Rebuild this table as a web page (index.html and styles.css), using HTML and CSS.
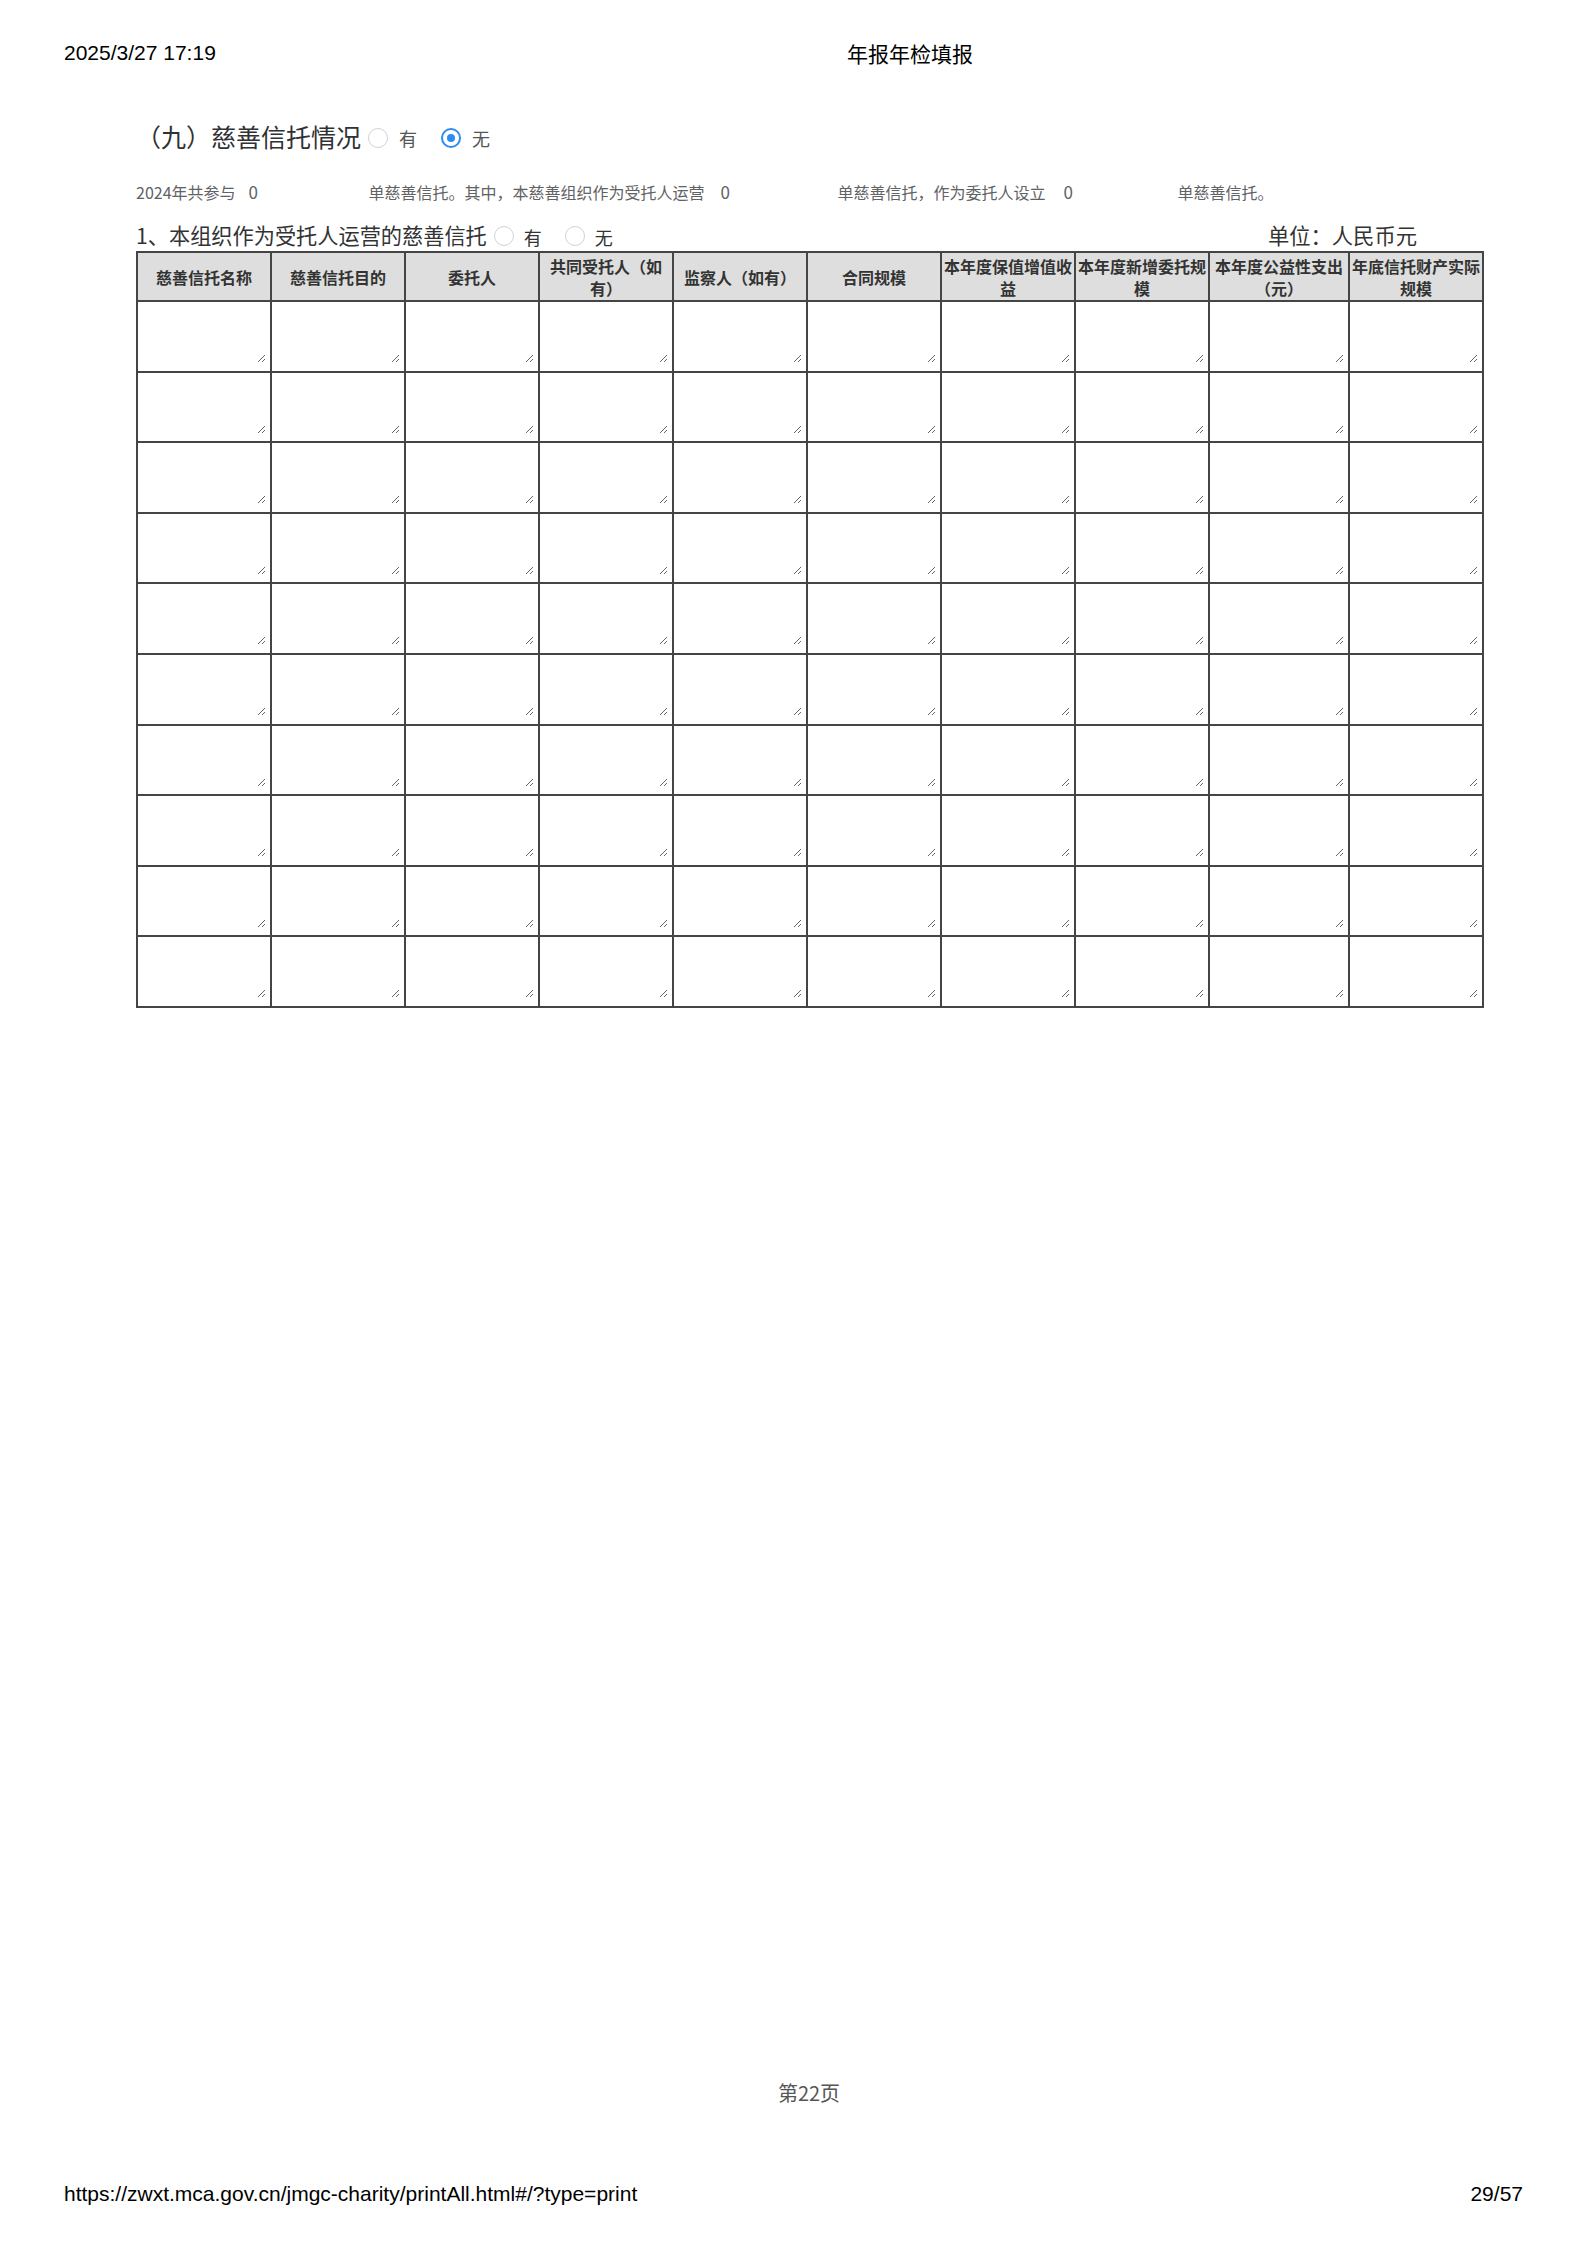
FILE: index.html
```html
<!DOCTYPE html>
<html lang="zh-CN">
<head>
<meta charset="utf-8">
<title>年报年检填报</title>
<link rel="stylesheet" href="styles.css">
</head>
<body>
<div class="page">
  <div class="print-head">
    <span class="head-date">2025/3/27 17:19</span>
    <span class="head-title">年报年检填报</span>
  </div>

  <div class="content">
    <div class="sec-title">
      <span class="sec-text">（九）慈善信托情况</span>
      <span class="radio"></span><span class="radio-label">有</span>
      <span class="radio radio-on"></span><span class="radio-label">无</span>
    </div>

    <div class="stats">
      <span class="stat-label">2024年共参与</span><span class="stat-val stat-val-first">0</span>
      <span class="stat-label">单慈善信托。其中，本慈善组织作为受托人运营</span><span class="stat-val">0</span>
      <span class="stat-label">单慈善信托，作为委托人设立</span><span class="stat-val stat-val-wide">0</span>
      <span class="stat-label">单慈善信托。</span>
    </div>

    <div class="sub-head">
      <div class="sub-left">
        <span class="sub-text">1、本组织作为受托人运营的慈善信托</span>
        <span class="radio"></span><span class="radio-label sub-radio-label">有</span>
        <span class="radio"></span><span class="radio-label sub-radio-label">无</span>
      </div>
      <div class="unit">单位：人民币元</div>
    </div>

    <table class="grid">
      <colgroup>
        <col class="c"><col class="c"><col class="c"><col class="c"><col class="c">
        <col class="c"><col class="c"><col class="c"><col class="c-wide"><col class="c">
      </colgroup>
      <thead>
        <tr>
          <th>慈善信托名称</th>
          <th>慈善信托目的</th>
          <th>委托人</th>
          <th>共同受托人（如有）</th>
          <th>监察人（如有）</th>
          <th>合同规模</th>
          <th>本年度保值增值收益</th>
          <th>本年度新增委托规模</th>
          <th>本年度公益性支出（元）</th>
          <th>年底信托财产实际规模</th>
        </tr>
      </thead>
      <tbody id="rows"></tbody>
    </table>
  </div>

  <div class="pageno">第22页</div>

  <div class="print-foot">
    <span>https://zwxt.mca.gov.cn/jmgc-charity/printAll.html#/?type=print</span>
    <span>29/57</span>
  </div>
</div>
<script src="script.js"></script>
</body>
</html>
```

FILE: script.js
```javascript
(function () {
  var body = document.getElementById('rows');
  var html = '';
  for (var r = 0; r < 10; r++) {
    html += '<tr>';
    for (var c = 0; c < 10; c++) {
      html += '<td><textarea class="cell-input"></textarea></td>';
    }
    html += '</tr>';
  }
  body.innerHTML = html;
})();
```

FILE: styles.css
```css
html, body {
  margin: 0;
  padding: 0;
  background: #fff;
}

.page {
  width: 1587px;
  height: 2245px;
  display: flex;
  flex-direction: column;
  font-family: "Noto Sans CJK SC", "Noto Sans", sans-serif;
  color: #333;
}

.print-head {
  display: flex;
  padding: 41px 64px 0 64px;
  font-family: "Liberation Sans", "Noto Sans CJK SC", sans-serif;
  font-size: 21px;
  line-height: 24px;
  color: #000;
}

.head-date {
  width: 783px;
}

.head-title {
  font-family: "Noto Sans CJK SC", sans-serif;
}

.content {
  margin-left: 136px;
  width: 1346px;
}

.sec-title {
  margin-top: 54px;
  display: flex;
  align-items: center;
  height: 34px;
}

.sec-text {
  font-size: 25px;
  line-height: 34px;
  color: #303133;
}

.radio {
  display: inline-block;
  box-sizing: border-box;
  width: 20px;
  height: 20px;
  border: 1px solid #d0d2d7;
  border-radius: 50%;
  background: #fff;
  margin-left: 7px;
  position: relative;
  top: 2px;
}

.radio-on {
  border: 2px solid #2d8cf0;
  margin-left: 24px;
}

.radio-on::after {
  content: "";
  position: absolute;
  left: 50%;
  top: 50%;
  width: 8px;
  height: 8px;
  margin: -4px 0 0 -4px;
  border-radius: 50%;
  background: #2d8cf0;
}

.radio-label {
  font-size: 18px;
  line-height: 24px;
  margin-left: 11px;
  color: #555;
  position: relative;
  top: 2px;
}

.stats {
  margin-top: 27px;
  display: flex;
  align-items: center;
  font-size: 16px;
  line-height: 24px;
  color: #606266;
}

.stat-val {
  display: inline-block;
  width: 117px;
  padding-left: 16px;
  font-size: 17px;
}

.stat-val-first {
  padding-left: 13px;
  width: 120px;
}

.stat-val-wide {
  width: 114px;
  padding-left: 18px;
}

.sub-head {
  margin-top: 17px;
  display: flex;
  justify-content: space-between;
  align-items: center;
  height: 28px;
  padding-right: 65px;
}

.sub-left {
  display: flex;
  align-items: center;
}

.sub-text {
  font-size: 21.2px;
  line-height: 28px;
  color: #333;
}

.sub-left .radio {
  margin-left: 7px;
  top: 1px;
}

.sub-left .radio-label {
  margin-left: 10px;
  color: #333;
}

.sub-left .radio-label + .radio {
  margin-left: 23px;
}

.unit {
  font-size: 21.3px;
  line-height: 28px;
  color: #333;
}

.grid {
  margin-top: 2px;
  width: 1346px;
  border-collapse: collapse;
  table-layout: fixed;
}

.grid .c {
  width: 134px;
}

.grid .c-wide {
  width: 140px;
}

.grid th,
.grid td {
  border: 2px solid #454545;
  padding: 0;
}

.grid th {
  height: 47px;
  background: #dedede;
  font-size: 16px;
  font-weight: bold;
  line-height: 22px;
  color: #333;
  text-align: center;
  vertical-align: middle;
  padding: 0 1px;
}

.grid td {
  height: 68.6px;
  vertical-align: top;
}

.cell-input {
  display: block;
  box-sizing: border-box;
  width: calc(100% - 4px);
  height: 60px;
  margin: 1px 0 0 0;
  border: none;
  outline: none;
  background: transparent;
  font-family: inherit;
  font-size: 14px;
  padding: 4px;
}

.pageno {
  margin-top: auto;
  margin-left: 136px;
  width: 1346px;
  text-align: center;
  font-size: 20px;
  line-height: 28px;
  color: #555;
  margin-bottom: 75px;
}

.print-foot {
  display: flex;
  justify-content: space-between;
  padding: 0 64px;
  margin-bottom: 39px;
  font-family: "Liberation Sans", sans-serif;
  font-size: 21px;
  line-height: 24px;
  color: #000;
}
```
